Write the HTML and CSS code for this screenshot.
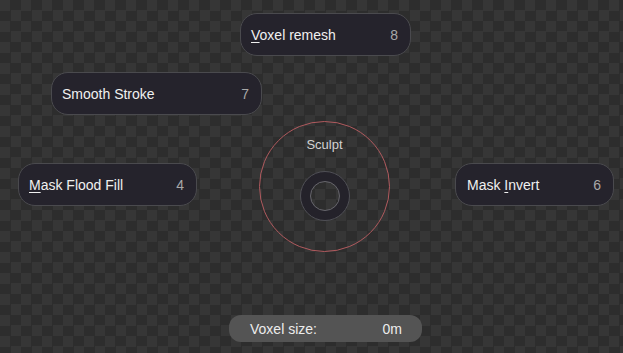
FILE: index.html
```html
<!DOCTYPE html>
<html>
<head>
<meta charset="utf-8">
<link rel="stylesheet" href="styles.css">
</head>
<body>
<div class="canvas">
  <div class="pie-item item-top"><span class="label"><u>V</u>oxel remesh</span><span class="key">8</span></div>
  <div class="pie-item item-topleft"><span class="label">Smooth Stroke</span><span class="key">7</span></div>
  <div class="pie-item item-left"><span class="label"><u>M</u>ask Flood Fill</span><span class="key">4</span></div>
  <div class="pie-item item-right"><span class="label">Mask <u>I</u>nvert</span><span class="key">6</span></div>
  <div class="pie-center">
    <span class="pie-title">Sculpt</span>
    <div class="pie-ring"><div class="pie-core"></div></div>
  </div>
  <div class="field"><span>Voxel size:</span><span>0m</span></div>
</div>
</body>
</html>
```
FILE: styles.css
```css
html, body {
  margin: 0;
  padding: 0;
}
body {
  width: 623px;
  height: 353px;
  overflow: hidden;
  font-family: "Liberation Sans", Arial, sans-serif;
  background: repeating-conic-gradient(#2d2d2d 0 25%, #363636 0 50%) 0 0 / 21px 21px;
}
.canvas {
  position: relative;
  width: 623px;
  height: 353px;
}
.pie-item {
  position: absolute;
  box-sizing: border-box;
  height: 43px;
  display: flex;
  align-items: center;
  justify-content: space-between;
  padding: 0 12px 0 10px;
  background: #25232c;
  border: 1px solid #4a4a4e;
  border-radius: 17px;
  font-size: 14px;
  color: #f0f0f0;
}
.pie-item u {
  text-decoration-thickness: 1px;
  text-underline-offset: 2px;
}
.pie-item .key {
  color: #a8a8a8;
}
.item-top { left: 240px; top: 13px; width: 171px; }
.item-topleft { left: 51px; top: 72px; width: 211px; }
.item-left { left: 18px; top: 163px; width: 179px; }
.item-right { left: 455px; top: 163px; width: 159px; padding-left: 11px; }
.pie-center {
  position: absolute;
  left: 259px;
  top: 121px;
  width: 131px;
  height: 131px;
  box-sizing: border-box;
  border: 1.4px solid #b05a5e;
  border-radius: 50%;
  display: flex;
  flex-direction: column;
  align-items: center;
}
.pie-title {
  margin-top: 15px;
  font-size: 13px;
  color: #d2d2d2;
}
.pie-ring {
  margin-top: 19px;
  width: 50px;
  height: 50px;
  box-sizing: border-box;
  border-radius: 50%;
  border: 1px solid #4f4f55;
  background: radial-gradient(circle, transparent 0 14px, #24222a 15px);
  display: flex;
  align-items: center;
  justify-content: center;
}
.pie-core {
  width: 30px;
  height: 30px;
  box-sizing: border-box;
  border-radius: 50%;
  border: 1px solid #66656c;
}
.field {
  position: absolute;
  left: 229px;
  top: 315px;
  width: 193px;
  height: 27px;
  box-sizing: border-box;
  padding: 0 20px 0 21px;
  background: #545454;
  border-radius: 12px;
  display: flex;
  align-items: center;
  justify-content: space-between;
  font-size: 14px;
  color: #ececec;
}
```
